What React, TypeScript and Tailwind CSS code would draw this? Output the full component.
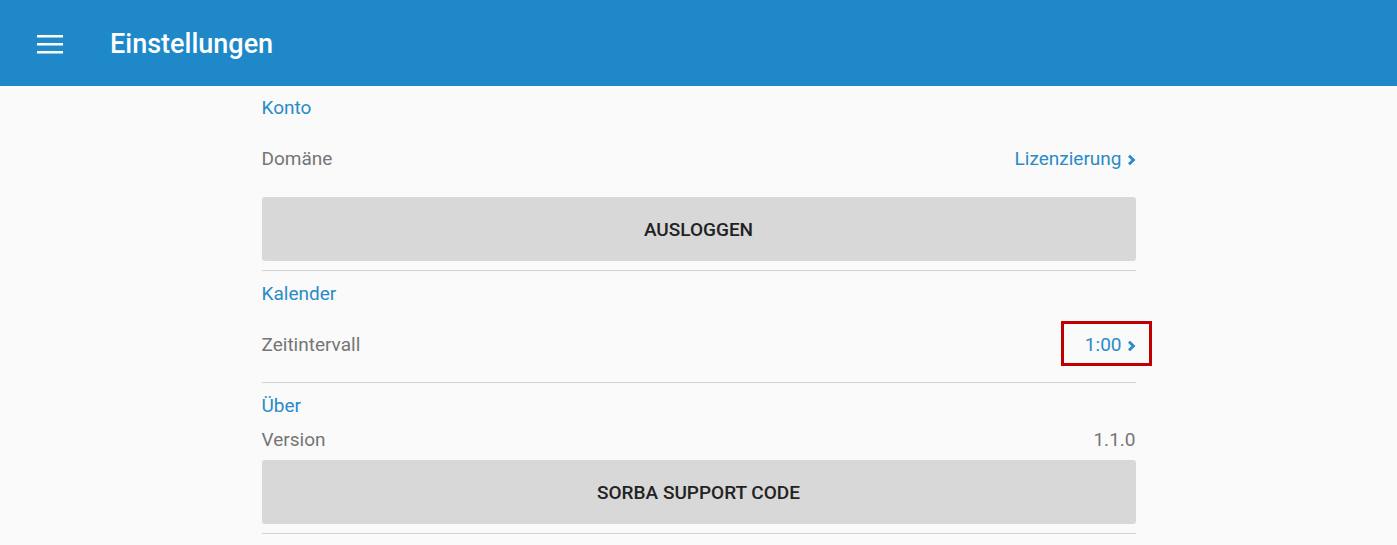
import React from "react";

const font = { fontFamily: "Roboto, 'Liberation Sans', sans-serif" };

const MenuIcon: React.FC = () => (
    <svg width="26" height="20" viewBox="0 0 26 20" className="block">
        <rect x="0" y="1" width="26" height="2.5" fill="#fff" />
        <rect x="0" y="9" width="26" height="2.5" fill="#fff" />
        <rect x="0" y="17" width="26" height="2.5" fill="#fff" />
    </svg>
);

const Chevron: React.FC = () => (
    <svg width="9" height="12" viewBox="0 0 9 12" className="block">
        <path d="M2 1.8 L6.4 6 L2 10.2" fill="none" stroke="currentColor" strokeWidth="2.9" strokeLinejoin="miter" />
    </svg>
);

const SectionTitle: React.FC<{ label: string; height: string }> = ({ label, height }) => (
    <div className={`flex items-center text-[19px] text-[#2a8bc6] ${height}`}>{label}</div>
);

const LinkValue: React.FC<{ text: string }> = ({ text }) => (
    <span className="flex items-center gap-[5px] text-[19px] text-[#2a8bc6]">
        {text}
        <Chevron />
    </span>
);

const GreyButton: React.FC<{ label: string; className?: string }> = ({ label, className }) => (
    <button
        type="button"
        className={`w-full h-[64px] pt-[3px] rounded-[3px] bg-[#d7d8d7] text-[19px] font-medium text-[#222] uppercase ${className ?? ""}`}
    >
        {label}
    </button>
);

const App: React.FC = () => {
    return (
        <div className="w-[1397px] h-[545px] overflow-hidden bg-[#fafafa]" style={font}>
            {/* app bar */}
            <header className="h-[86px] bg-[#1e88c9] flex items-center">
                <div className="ml-[37px] mt-[1px]">
                    <MenuIcon />
                </div>
                <h1 className="ml-[47px] mt-[2px] text-[27px] font-medium text-white">Einstellungen</h1>
            </header>

            <main className="w-[874px] mx-auto">
                {/* Konto */}
                <section className="pb-[9px] border-b border-[#d3d3d3]">
                    <SectionTitle label="Konto" height="h-[45px]" />
                    <div className="h-[57px] flex items-center justify-between">
                        <span className="text-[19px] text-[#757575]">Domäne</span>
                        <LinkValue text="Lizenzierung" />
                    </div>
                    <GreyButton label="Ausloggen" className="mt-[9px]" />
                </section>

                {/* Kalender */}
                <section className="pb-[8px] border-b border-[#d3d3d3]">
                    <SectionTitle label="Kalender" height="h-[46px]" />
                    <div className="relative h-[57px] flex items-center justify-between">
                        <span className="text-[19px] text-[#757575]">Zeitintervall</span>
                        <LinkValue text="1:00" />
                        {/* highlight box */}
                        <div className="absolute right-[-16px] top-[4px] w-[91px] h-[45px] border-[3px] border-[#c00000]" />
                    </div>
                </section>

                {/* Über */}
                <section className="pb-[9px] border-b border-[#d3d3d3]">
                    <SectionTitle label="Über" height="h-[46px]" />
                    <div className="h-[22px] flex items-center justify-between text-[19px] text-[#757575]">
                        <span>Version</span>
                        <span>1.1.0</span>
                    </div>
                    <GreyButton label="Sorba Support Code" className="mt-[9px]" />
                </section>
            </main>
        </div>
    );
};

export default App;
